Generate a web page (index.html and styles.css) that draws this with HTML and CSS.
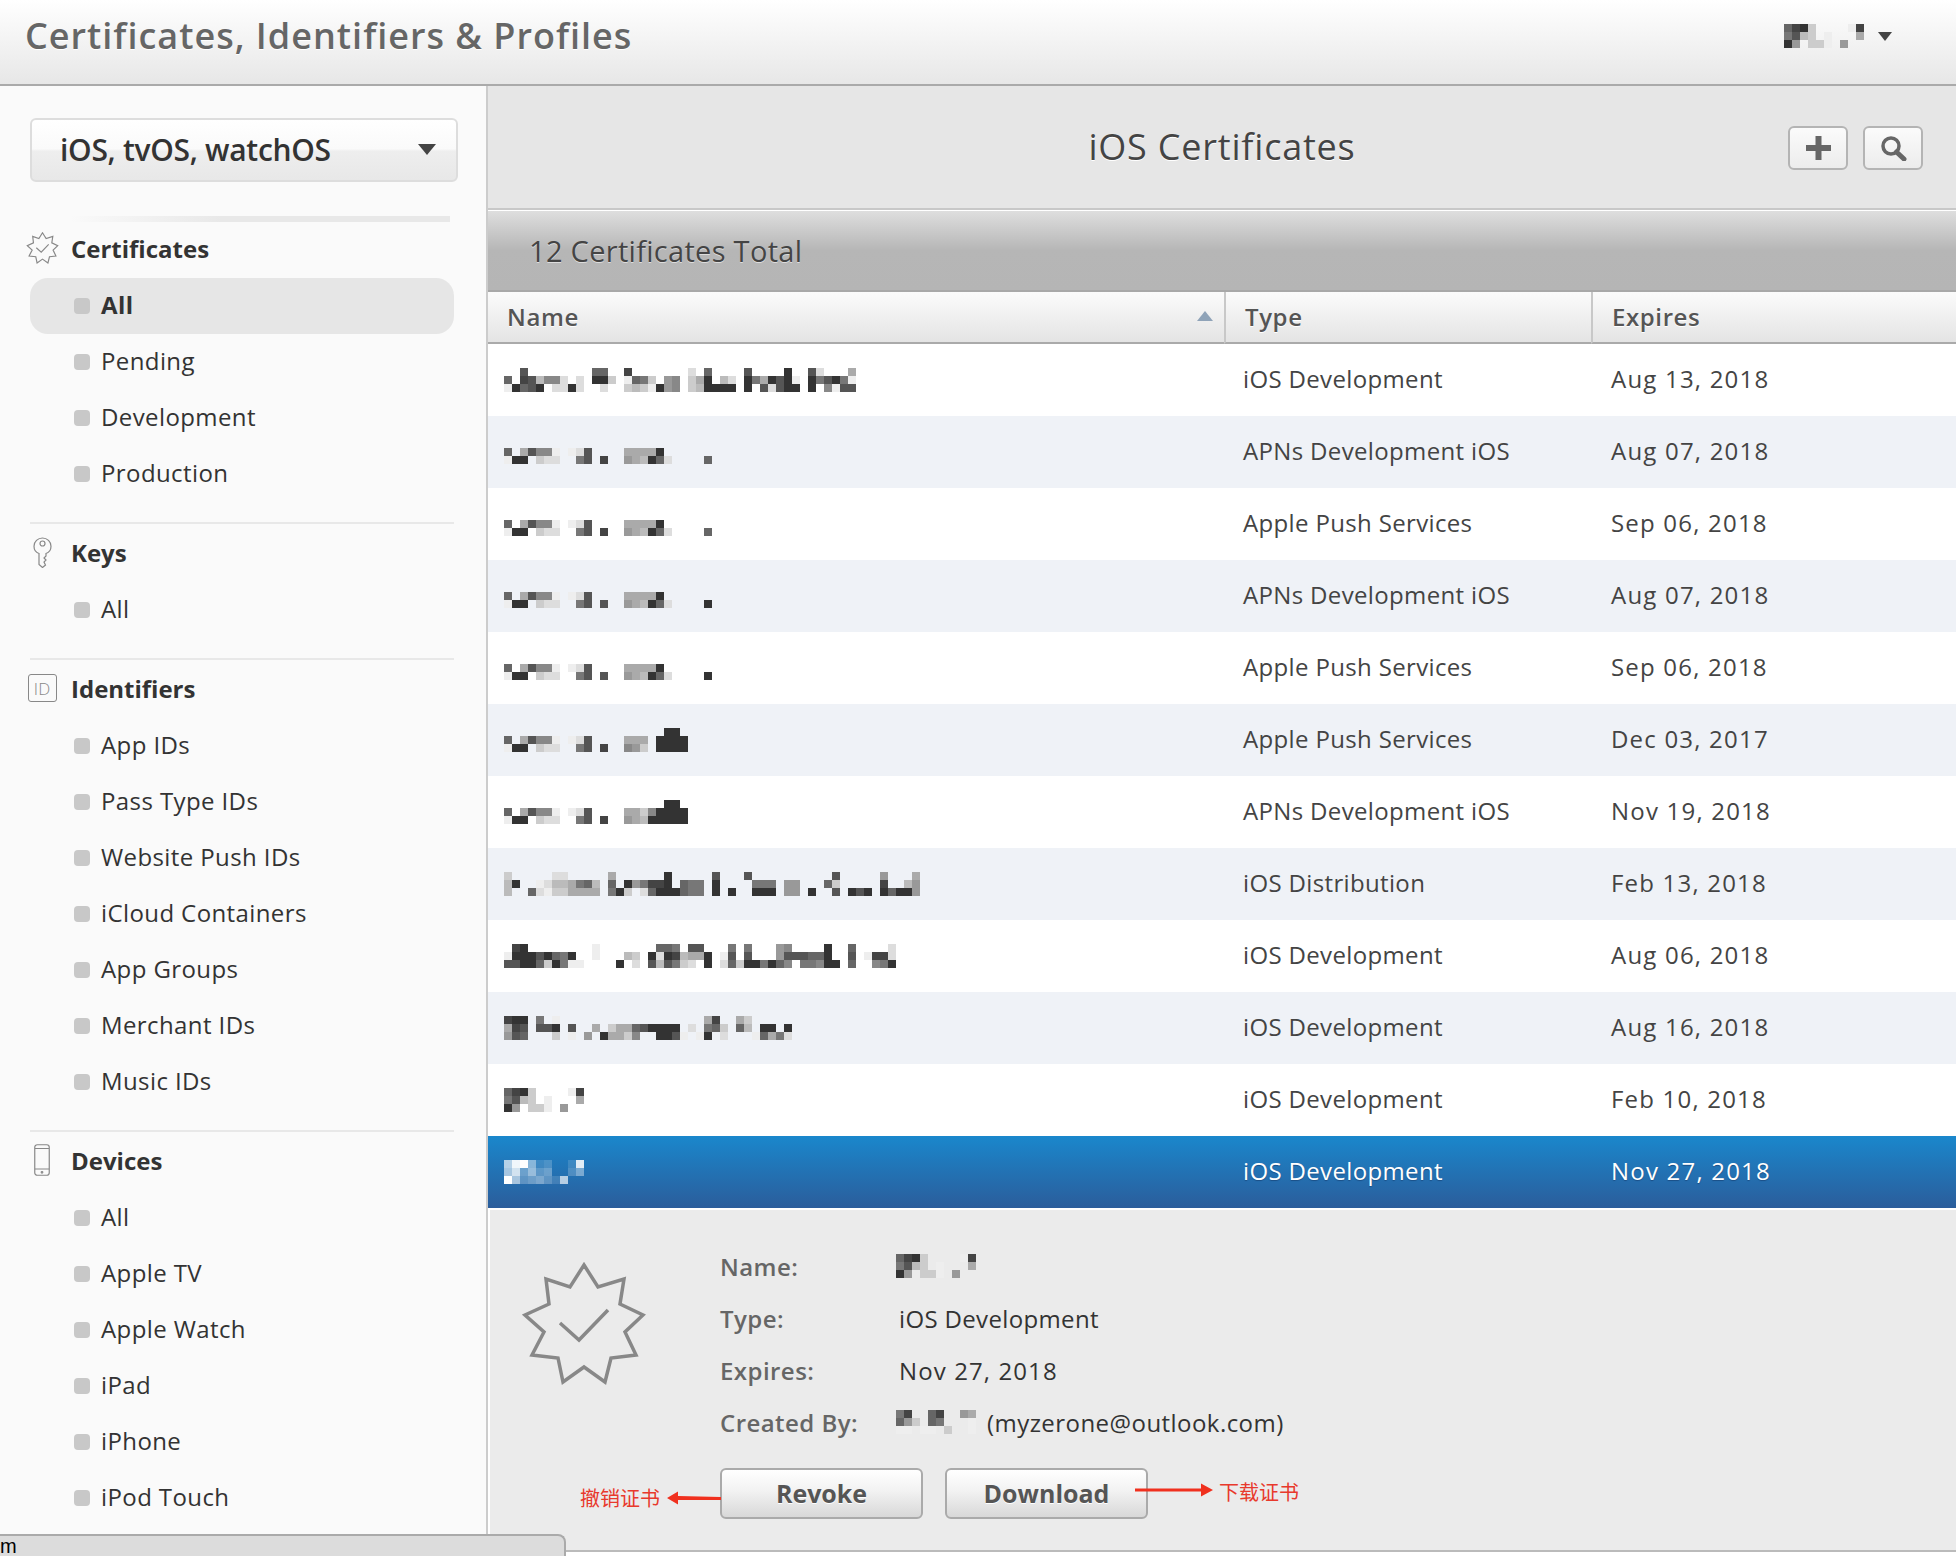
FILE: index.html
```html
<!DOCTYPE html>
<html lang="en">
<head>
    <meta charset="UTF-8">
    <meta name="viewport" content="width=device-width, initial-scale=1.0">
    <title>iOS Certificates</title>
    <link rel="stylesheet" href="styles.css">
</head>
<body>
    <div class="topbar">
        <div class="brand">Certificates, Identifiers &amp; Profiles</div>
        <div class="account">
            <span class="mosaic" data-rows="643cffffe4|75bcfefffa|39fccef9ff"></span>
            <span class="caret small"></span>
        </div>
    </div>

    <div class="page">
        <div class="sidebar">
            <div class="platform">
                <span>iOS, tvOS, watchOS</span>
                <span class="caret"></span>
            </div>
            <div class="fade-line"></div>

            <div class="nav-section first">
                <div class="nav-title">
                    <span class="nav-icon">
                        <svg width="33" height="32" viewBox="0 0 124 124" class="badge thin">
                            <polygon points="62,3 76,25 102,17 98,42 121,53 103,70 114,93 89,96 83,120 62,105 41,120 36,96 10,93 22,70 3,53 27,42 24,17 48,25"/>
                            <polyline points="38,61 57,78 86,48"/>
                        </svg>
                    </span>
                    Certificates
                </div>
                <div class="nav-item active"><i></i>All</div>
                <div class="nav-item"><i></i>Pending</div>
                <div class="nav-item"><i></i>Development</div>
                <div class="nav-item"><i></i>Production</div>
            </div>

            <div class="nav-section">
                <div class="nav-title">
                    <span class="nav-icon">
                        <svg width="19" height="31" viewBox="0 0 19 31" class="line-icon">
                            <path d="M6 16.500C2.800 15.300 1 12.500 1 9.200C1 4.600 4.800 1 9.500 1C14.200 1 18 4.600 18 9.200C18 12.500 16.200 15.300 13 16.500V19L11 21L13 23L11 25L12.500 28L9.500 30.500L6 27.500Z"/>
                            <circle cx="9.500" cy="6.500" r="2.500"/>
                        </svg>
                    </span>
                    Keys
                </div>
                <div class="nav-item"><i></i>All</div>
            </div>

            <div class="nav-section">
                <div class="nav-title">
                    <span class="nav-icon"><span class="id-box">ID</span></span>
                    Identifiers
                </div>
                <div class="nav-item"><i></i>App IDs</div>
                <div class="nav-item"><i></i>Pass Type IDs</div>
                <div class="nav-item"><i></i>Website Push IDs</div>
                <div class="nav-item"><i></i>iCloud Containers</div>
                <div class="nav-item"><i></i>App Groups</div>
                <div class="nav-item"><i></i>Merchant IDs</div>
                <div class="nav-item"><i></i>Music IDs</div>
            </div>

            <div class="nav-section">
                <div class="nav-title">
                    <span class="nav-icon">
                        <svg width="16" height="32" viewBox="0 0 16 32" class="line-icon">
                            <rect x="0.750" y="0.750" width="14.500" height="30.500" rx="2.500"/>
                            <path d="M1 4.500H15M1 25H15"/>
                            <circle cx="8" cy="28.300" r="0.800"/>
                        </svg>
                    </span>
                    Devices
                </div>
                <div class="nav-item"><i></i>All</div>
                <div class="nav-item"><i></i>Apple TV</div>
                <div class="nav-item"><i></i>Apple Watch</div>
                <div class="nav-item"><i></i>iPad</div>
                <div class="nav-item"><i></i>iPhone</div>
                <div class="nav-item"><i></i>iPod Touch</div>
            </div>
        </div>

        <div class="main">
            <div class="toolbar">
                <h1>iOS Certificates</h1>
                <div class="tools">
                    <div class="tool">
                        <svg width="25" height="24" viewBox="0 0 25 24"><path d="M9.500 0H15.500V9H25V15H15.500V24H9.500V15H0V9H9.500Z" fill="#666"/></svg>
                    </div>
                    <div class="tool">
                        <svg width="27" height="25" viewBox="0 0 27 25" fill="none" stroke="#666"><circle cx="11" cy="10" r="8" stroke-width="3.500"/><path d="M16.500 16L24 23" stroke-width="5" stroke-linecap="round"/></svg>
                    </div>
                </div>
            </div>

            <div class="total-bar">12 Certificates Total</div>

            <table class="cert-table">
                <thead>
                    <tr>
                        <th class="col-name"><div class="th-sort">Name<span class="sort-arrow"></span></div></th>
                        <th class="col-type">Type</th>
                        <th>Expires</th>
                    </tr>
                </thead>
                <tbody>
                    <tr>
                        <td><span class="mosaic" data-rows="ff5ffffffff66ff4fffffffdf6ffff5ffff3ff5dfffa|6f45b88dfdf33cfe67cf98fca3fbdf37a353ef37537e|e3653fdd3dffdffcbce398fcb3333f3f5d533f3f8e55"></span></td>
                        <td>iOS Development</td>
                        <td class="date">Aug 13, 2018</td>
                    </tr>
                    <tr>
                        <td><span class="mosaic" data-rows="f|6fa588efed5ffffaaaa3ffffff|e33fcddff75f4ff9ab36dffff6"></span></td>
                        <td>APNs Development iOS</td>
                        <td class="date">Aug 07, 2018</td>
                    </tr>
                    <tr>
                        <td><span class="mosaic" data-rows="f|6fa588efed5ffffaaaa3ffffff|e33fcddff75f4ff9ab36dffff6"></span></td>
                        <td>Apple Push Services</td>
                        <td class="date">Sep 06, 2018</td>
                    </tr>
                    <tr>
                        <td><span class="mosaic" data-rows="f|6fa588efed5ffffaaaa3ffffff|e33fcddff75f5ff9ab36dffff3"></span></td>
                        <td>APNs Development iOS</td>
                        <td class="date">Aug 07, 2018</td>
                    </tr>
                    <tr>
                        <td><span class="mosaic" data-rows="f|6fa588efed5ffffaaaa3ffffff|e33fcddff75f5ff9ab36dffff3"></span></td>
                        <td>Apple Push Services</td>
                        <td class="date">Sep 06, 2018</td>
                    </tr>
                    <tr>
                        <td><span class="mosaic" data-rows="ffffffffffffffffffff33f|6fa588efed5ffffaaaf3333|e33fcddff75f4ff89cf3333"></span></td>
                        <td>Apple Push Services</td>
                        <td class="date">Dec 03, 2017</td>
                    </tr>
                    <tr>
                        <td><span class="mosaic" data-rows="ffffffffffffffffffff33f|6fa588efed5ffffaac83333|e33fcddff75f4ff9ab33333"></span></td>
                        <td>APNs Development iOS</td>
                        <td class="date">Nov 19, 2018</td>
                    </tr>
                    <tr>
                        <td><span class="mosaic" data-rows="cfffffddfffffaffffff3fffff5fff5ffffffffff5fffff9fffa|b3ffedbba76bf6f397443f677f3ffff777f99fff6cfffff4ffb9|bff6deccaaaaf73cfd6333677f3f3ff333f99f3ff5f353f36339"></span></td>
                        <td>iOS Distribution</td>
                        <td class="date">Feb 13, 2018</td>
                    </tr>
                    <tr>
                        <td><span class="mosaic" data-rows="f43ffffffffefffffff667f55fff7f7fff98ffff3ff6ffffd|e33353673ffefffbcf3d34baa3fe5f5fff9555663ff5fe44d|55336c37eeffff3fdf5b57cdf3fd6c337368f77833f6ff873"></span></td>
                        <td>iOS Development</td>
                        <td class="date">Aug 06, 2018</td>
                    </tr>
                    <tr>
                        <td><span class="mosaic" data-rows="433f7feffffffffffffffffffa4ffacfffff|a45f553f5ffafcaa653333fdf76cf6bf33f3|956fffcfef9f3aac8ff335efe3fdfffe6a7d"></span></td>
                        <td>iOS Development</td>
                        <td class="date">Aug 16, 2018</td>
                    </tr>
                    <tr>
                        <td><span class="mosaic" data-rows="643cffffe4|75bcfefffa|39fccef9ff"></span></td>
                        <td>iOS Development</td>
                        <td class="date">Feb 10, 2018</td>
                    </tr>
                    <tr class="selected">
                        <td><span class="mosaic light" data-rows="aef723002d|9c58450036|f945642a00"></span></td>
                        <td>iOS Development</td>
                        <td class="date">Nov 27, 2018</td>
                    </tr>
                </tbody>
            </table>

            <div class="detail">
                <div class="detail-icon">
                    <svg width="124" height="124" viewBox="0 0 124 124" class="badge">
                        <polygon points="62,3 76,25 102,17 98,42 121,53 103,70 114,93 89,96 83,120 62,105 41,120 36,96 10,93 22,70 3,53 27,42 24,17 48,25"/>
                        <polyline points="38,61 57,78 86,48"/>
                    </svg>
                </div>
                <div class="detail-info">
                    <div class="info-row">
                        <span class="info-label">Name:</span>
                        <span class="mosaic" data-rows="643cffffe4|75bcfefffa|39fccef9ff"></span>
                    </div>
                    <div class="info-row">
                        <span class="info-label">Type:</span>
                        <span class="info-value">iOS Development</span>
                    </div>
                    <div class="info-row">
                        <span class="info-label">Expires:</span>
                        <span class="info-value date">Nov 27, 2018</span>
                    </div>
                    <div class="info-row">
                        <span class="info-label">Created By:</span>
                        <span class="mosaic" data-rows="74ff64ff9a|69cf67fffe|eefeefcffe"></span>
                        <span class="info-email">(myzerone@outlook.com)</span>
                    </div>
                    <div class="detail-actions">
                        <div class="btn">Revoke</div>
                        <div class="btn">Download</div>
                    </div>
                </div>

                <div class="note note-revoke">撤销证书</div>
                <svg class="note-arrow arrow-revoke" width="54" height="14" viewBox="0 0 54 14"><path d="M0 7L11 0.500V5L54 6V9L11 9V13.500Z" fill="#f0301e"/></svg>
                <svg class="note-arrow arrow-download" width="78" height="14" viewBox="0 0 78 14"><path d="M78 7L66 0.500V5.500L0 5.500V8.500L66 8.500V13.500Z" fill="#f0301e"/></svg>
                <div class="note note-download">下载证书</div>
            </div>
        </div>
    </div>

    <div class="status-bubble">m</div>

    <script src="mosaic.js"></script>
</body>
</html>
```

FILE: styles.css
```css
* {
    box-sizing: border-box;
}

html, body {
    height: 100%;
}

body {
    font-family: "Open Sans", "Noto Sans", sans-serif;
    margin: 0;
    height: 1556px;
    overflow: hidden;
    color: #333;
    background-color: #fff;
}

.topbar {
    height: 86px;
    display: flex;
    justify-content: space-between;
    align-items: center;
    padding: 0 64px 12px 25px;
    background: linear-gradient(#fff 0%, #e7e7e7 100%);
    border-bottom: 2px solid #aaa;
}

.brand {
    font-size: 36px;
    font-weight: 600;
    letter-spacing: 1px;
    color: #666;
    text-shadow: 0 1px 0 #fff;
    line-height: 1;
}

.account {
    display: flex;
    align-items: center;
    gap: 14px;
}

.caret {
    width: 0;
    height: 0;
    border-left: 9px solid transparent;
    border-right: 9px solid transparent;
    border-top: 11px solid #444;
}

.caret.small {
    border-left-width: 7px;
    border-right-width: 7px;
    border-top-width: 9px;
}

.mosaic {
    display: block;
    line-height: 0;
}

.mosaic svg {
    display: block;
}

.page {
    display: flex;
    height: 1470px;
}

/* sidebar */
.sidebar {
    width: 488px;
    flex-shrink: 0;
    padding: 32px 0 0 30px;
    background-color: #fafafa;
    border-right: 2px solid #ccc;
    overflow: hidden;
}

.platform {
    width: 428px;
    height: 64px;
    display: flex;
    justify-content: space-between;
    align-items: center;
    padding: 0 20px 2px 28px;
    font-size: 30px;
    font-weight: 600;
    letter-spacing: -0.3px;
    color: #333;
    background: linear-gradient(#fff 0%, #fafafa 48%, #eee 52%, #e8e8e8 100%);
    border: 2px solid #ddd;
    border-radius: 6px;
}

.fade-line {
    width: 380px;
    height: 6px;
    margin: 34px 0 0 40px;
    background: linear-gradient(90deg, #fafafa 0%, #e8e8e8 40%, #e8e8e8 100%);
}

.nav-section {
    width: 424px;
    padding: 2px 0 20px;
    border-top: 2px solid #e8e8e8;
}

.nav-section.first {
    padding-top: 0;
    border-top: none;
}

.nav-title {
    height: 56px;
    display: flex;
    align-items: center;
    padding-bottom: 4px;
    position: relative;
    left: 41px;
    font-size: 24px;
    font-weight: 700;
    color: #333;
}

.nav-icon {
    position: absolute;
    left: -47px;
    width: 36px;
    display: flex;
    justify-content: center;
}

.id-box {
    width: 29px;
    height: 28px;
    display: flex;
    justify-content: center;
    align-items: center;
    font-size: 17px;
    font-weight: 300;
    color: #888;
    border: 1.5px solid #888;
    border-radius: 3px;
}

.line-icon {
    fill: none;
    stroke: #888;
    stroke-width: 1.2;
}

.badge {
    fill: none;
    stroke: #888;
    stroke-width: 3.5;
    stroke-linejoin: miter;
}

.badge.thin {
    stroke-width: 4.5;
}

.nav-item {
    height: 56px;
    display: flex;
    align-items: center;
    padding: 0 0 4px 44px;
    font-size: 24px;
    letter-spacing: 0.4px;
    color: #333;
    border-radius: 18px;
}

.nav-item i {
    width: 16px;
    height: 16px;
    margin: 4px 11px 0 0;
    background-color: #c8c8c8;
    border-radius: 4px;
}

.nav-item.active {
    font-weight: 700;
    background-color: #e6e6e6;
}

/* main column */
.main {
    flex: 1;
    min-width: 0;
}

.toolbar {
    height: 124px;
    display: flex;
    justify-content: center;
    align-items: center;
    position: relative;
    padding-bottom: 2px;
    background-color: #e6e6e6;
    border-bottom: 2px solid #c8c8c8;
}

.toolbar h1 {
    margin: 0;
    font-size: 36px;
    font-weight: 400;
    letter-spacing: 0.8px;
    color: #444;
    text-shadow: 0 1px 0 #fff;
}

.tools {
    position: absolute;
    right: 33px;
    top: 40px;
    display: flex;
    gap: 15px;
}

.tool {
    width: 60px;
    height: 44px;
    display: flex;
    justify-content: center;
    align-items: center;
    background: linear-gradient(#fbfbfb 0%, #ececec 100%);
    border: 2px solid #b4b4b4;
    border-radius: 6px;
}

.total-bar {
    height: 82px;
    display: flex;
    align-items: center;
    padding: 0 0 0 41px;
    font-size: 29px;
    letter-spacing: 0.3px;
    color: #444;
    text-shadow: 0 1px 0 #ddd;
    background: linear-gradient(#dedede 0%, #b6b6b6 50%, #b5b5b5 100%);
    border-top: 1px solid #fff;
    border-bottom: 2px solid #a8a8a8;
}

.cert-table {
    width: 100%;
    border-collapse: separate;
    border-spacing: 0;
    table-layout: fixed;
    font-size: 24px;
    letter-spacing: 0.35px;
}

.cert-table th {
    height: 52px;
    padding: 0 0 2px 19px;
    text-align: left;
    font-weight: 600;
    letter-spacing: 0.6px;
    color: #555;
    text-shadow: 0 1px 0 #fff;
    background: linear-gradient(#fbfbfb 0%, #e4e4e4 100%);
    border-bottom: 2px solid #aaa;
    border-left: 2px solid #c8c8c8;
}

.cert-table th:first-child {
    padding-left: 19px;
    border-left: none;
}

.col-name {
    width: 736px;
}

.col-type {
    width: 367px;
}

.th-sort {
    display: flex;
    justify-content: space-between;
    align-items: center;
    padding-right: 11px;
}

.sort-arrow {
    width: 0;
    height: 0;
    border-left: 8px solid transparent;
    border-right: 8px solid transparent;
    border-bottom: 10px solid #8fa3b8;
}

.cert-table td {
    height: 72px;
    padding: 0 0 4px 19px;
    color: #444;
}

.cert-table td:first-child {
    padding: 0 0 0 16px;
}

.cert-table td.date {
    padding-left: 20px;
}

.date {
    letter-spacing: 1.2px;
}

.cert-table tbody tr:nth-child(even) {
    background-color: #eff2f7;
}

.cert-table tr.selected,
.cert-table tbody tr.selected:nth-child(even) {
    background: linear-gradient(#1a87cc 0%, #2b5d9b 100%);
}

.cert-table tr.selected td {
    color: #fff;
    text-shadow: 0 1px 1px #1b4f86;
}

/* detail panel */
.detail {
    height: 342px;
    display: flex;
    position: relative;
    margin: 2px 0 0 2px;
    padding: 30px 0 0 32px;
    background-color: #ebebeb;
    border-bottom: 2px solid #bbb;
}

.detail-icon {
    width: 198px;
    padding-top: 22px;
}

.info-row {
    height: 52px;
    display: flex;
    align-items: center;
    font-size: 24px;
    letter-spacing: 0.35px;
    color: #333;
}

.info-label {
    width: 176px;
    font-weight: 600;
    letter-spacing: 0.45px;
    color: #666;
}

.info-value {
    padding-left: 3px;
}

.info-value.date {
    letter-spacing: 1.1px;
}

.info-email {
    margin-left: 11px;
    letter-spacing: 0.45px;
}

.detail-actions {
    display: flex;
    gap: 22px;
    margin-top: 20px;
}

.btn {
    width: 203px;
    height: 51px;
    display: flex;
    justify-content: center;
    align-items: center;
    padding-bottom: 2px;
    font-size: 25px;
    font-weight: 700;
    color: #555;
    text-shadow: 0 1px 0 #fff;
    background: linear-gradient(#fff 0%, #f2f2f2 45%, #d8d8d8 100%);
    border: 2px solid #aaa;
    border-radius: 6px;
}

.note {
    position: absolute;
    font-family: "Noto Sans CJK SC", sans-serif;
    font-size: 20px;
    line-height: 1;
    color: #e8392c;
}

.note-revoke {
    left: 90px;
    top: 278px;
}

.note-download {
    left: 729px;
    top: 272px;
}

.note-arrow {
    position: absolute;
}

.arrow-revoke {
    left: 177px;
    top: 281px;
}

.arrow-download {
    left: 645px;
    top: 273px;
}

.status-bubble {
    position: absolute;
    left: -2px;
    top: 1534px;
    width: 568px;
    height: 22px;
    font-family: "Liberation Sans", sans-serif;
    font-size: 20px;
    line-height: 20px;
    color: #000;
    background-color: #dcdcdc;
    border: 2px solid #aaa;
    border-bottom: none;
    border-radius: 0 8px 0 0;
}
```

FILE: mosaic.js
```js
// draws the blurred-out names: each digit is one 8px cell, f = empty
const CELL = 8;
const SVG_NS = 'http://www.w3.org/2000/svg';

function grayLevel(value) {
    const g = Math.min(255, Math.round(51 + (value - 3) * 17));
    return `rgb(${g}, ${g}, ${g})`;
}

function drawMosaic(el) {
    const rows = el.dataset.rows.split('|');
    const light = el.classList.contains('light');
    const cols = Math.max(...rows.map(row => row.length));

    const svg = document.createElementNS(SVG_NS, 'svg');
    svg.setAttribute('width', cols * CELL);
    svg.setAttribute('height', rows.length * CELL);

    rows.forEach((row, y) => {
        row.split('').forEach((ch, x) => {
            const value = parseInt(ch, 16);
            if (light ? value === 0 : value === 15) return;

            const rect = document.createElementNS(SVG_NS, 'rect');
            rect.setAttribute('x', x * CELL);
            rect.setAttribute('y', y * CELL);
            rect.setAttribute('width', CELL);
            rect.setAttribute('height', CELL);
            if (light) {
                rect.setAttribute('fill', '#fff');
                rect.setAttribute('fill-opacity', value / 15);
            } else {
                rect.setAttribute('fill', grayLevel(value));
            }
            svg.appendChild(rect);
        });
    });

    el.appendChild(svg);
}

document.querySelectorAll('.mosaic').forEach(drawMosaic);
```
